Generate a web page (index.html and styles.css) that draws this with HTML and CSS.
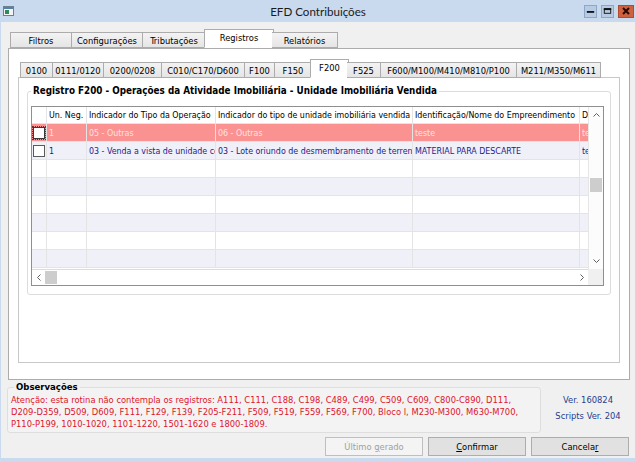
FILE: index.html
```html
<!DOCTYPE html>
<html lang="pt-BR">
<head>
<meta charset="utf-8">
<title>EFD Contribuições</title>
<link rel="stylesheet" href="styles.css">
</head>
<body>
<div class="window">
  <div class="titlebar">
    <div class="tb-left">
      <svg class="app-icon" width="11" height="10" viewBox="0 0 11 10"><rect x="0.5" y="0.5" width="10" height="9" fill="#f4f4f4" stroke="#6d7f92"/><rect x="1" y="1" width="9" height="2" fill="#5b7fa6"/><rect x="2" y="4" width="4" height="4" fill="#2f8a5a"/></svg>
    </div>
    <div class="title">EFD Contribuições</div>
    <div class="controls">
      <span class="ctl"><svg width="12" height="12" viewBox="0 0 12 12"><rect x="2" y="6" width="8" height="2" fill="#111"/></svg></span>
      <span class="ctl"><svg width="12" height="12" viewBox="0 0 12 12"><rect x="2.5" y="3.5" width="7" height="5" fill="none" stroke="#111"/><rect x="2" y="3" width="8" height="2" fill="#111"/></svg></span>
      <span class="ctl close"><svg width="14" height="12" viewBox="0 0 14 12"><path d="M4 3 L10 9 M10 3 L4 9" stroke="#2a0a00" stroke-width="2"/></svg></span>
    </div>
  </div>

  <div class="client">
    <div class="tabs main-tabs">
      <div class="tab t-filtros">Filtros</div>
      <div class="tab t-config">Configurações</div>
      <div class="tab t-trib">Tributações</div>
      <div class="tab active t-reg">Registros</div>
      <div class="tab t-rel">Relatórios</div>
    </div>
    <div class="main-panel">
      <div class="tabs sub-tabs">
        <div class="tab s1">0100</div>
        <div class="tab s2">0111/0120</div>
        <div class="tab s3">0200/0208</div>
        <div class="tab s4">C010/C170/D600</div>
        <div class="tab s5">F100</div>
        <div class="tab s6">F150</div>
        <div class="tab active s7">F200</div>
        <div class="tab s8">F525</div>
        <div class="tab s9">F600/M100/M410/M810/P100</div>
        <div class="tab s10">M211/M350/M611</div>
      </div>
      <div class="sub-panel">
        <fieldset class="group">
          <legend>Registro F200 - Operações da Atividade Imobiliária - Unidade Imobiliária Vendida</legend>
          <div class="grid">
            <div class="grid-body">
              <div class="row header">
                <div class="cell c0"></div>
                <div class="cell c1">Un. Neg.</div>
                <div class="cell c2">Indicador do Tipo da Operação</div>
                <div class="cell c3">Indicador do tipo de unidade imobiliária vendida</div>
                <div class="cell c4">Identificação/Nome do Empreendimento</div>
                <div class="cell c5">Descrição</div>
              </div>
              <div class="row selected">
                <div class="cell c0"><span class="check focus"></span></div>
                <div class="cell c1">1</div>
                <div class="cell c2">05 - Outras</div>
                <div class="cell c3">06 - Outras</div>
                <div class="cell c4">teste</div>
                <div class="cell c5">teste</div>
              </div>
              <div class="row data alt">
                <div class="cell c0"><span class="check"></span></div>
                <div class="cell c1">1</div>
                <div class="cell c2">03 - Venda a vista de unidade concluída</div>
                <div class="cell c3">03 - Lote oriundo de desmembramento de terreno</div>
                <div class="cell c4">MATERIAL PARA DESCARTE</div>
                <div class="cell c5">teste</div>
              </div>
              <div class="row"><div class="cell c0"></div><div class="cell c1"></div><div class="cell c2"></div><div class="cell c3"></div><div class="cell c4"></div><div class="cell c5"></div></div>
              <div class="row alt"><div class="cell c0"></div><div class="cell c1"></div><div class="cell c2"></div><div class="cell c3"></div><div class="cell c4"></div><div class="cell c5"></div></div>
              <div class="row"><div class="cell c0"></div><div class="cell c1"></div><div class="cell c2"></div><div class="cell c3"></div><div class="cell c4"></div><div class="cell c5"></div></div>
              <div class="row alt"><div class="cell c0"></div><div class="cell c1"></div><div class="cell c2"></div><div class="cell c3"></div><div class="cell c4"></div><div class="cell c5"></div></div>
              <div class="row"><div class="cell c0"></div><div class="cell c1"></div><div class="cell c2"></div><div class="cell c3"></div><div class="cell c4"></div><div class="cell c5"></div></div>
              <div class="row alt"><div class="cell c0"></div><div class="cell c1"></div><div class="cell c2"></div><div class="cell c3"></div><div class="cell c4"></div><div class="cell c5"></div></div>
            </div>
            <div class="vscroll">
              <span class="arrow"><svg width="7" height="4" viewBox="0 0 7 4"><path d="M0.5 3.5 L3.5 0.5 L6.5 3.5" fill="none" stroke="#606060"/></svg></span>
              <span class="vtrack"><span class="vthumb"></span></span>
              <span class="arrow"><svg width="7" height="4" viewBox="0 0 7 4"><path d="M0.5 0.5 L3.5 3.5 L6.5 0.5" fill="none" stroke="#606060"/></svg></span>
            </div>
            <div class="hscroll">
              <span class="arrow"><svg width="4" height="7" viewBox="0 0 4 7"><path d="M3.5 0.5 L0.5 3.5 L3.5 6.5" fill="none" stroke="#606060"/></svg></span>
              <span class="hthumb"></span>
              <span class="htrack"></span>
              <span class="arrow"><svg width="4" height="7" viewBox="0 0 4 7"><path d="M0.5 0.5 L3.5 3.5 L0.5 6.5" fill="none" stroke="#606060"/></svg></span>
            </div>
            <div class="corner"></div>
          </div>
        </fieldset>
      </div>
    </div>

    <div class="bottom">
      <fieldset class="obs">
        <legend>Observações</legend>
        <p class="obs-text">Atenção: esta rotina não contempla os registros: A111, C111, C188, C198, C489, C499, C509, C609, C800-C890, D111,<br>D209-D359, D509, D609, F111, F129, F139, F205-F211, F509, F519, F559, F569, F700, Bloco I, M230-M300, M630-M700,<br>P110-P199, 1010-1020, 1101-1220, 1501-1620 e 1800-1809.</p>
      </fieldset>
      <div class="version">
        <div>Ver. 160824</div>
        <div>Scripts Ver. 204</div>
      </div>
    </div>

    <div class="buttons">
      <button class="btn" disabled>Último <u>g</u>erado</button>
      <button class="btn"><u>C</u>onfirmar</button>
      <button class="btn">Cancela<u>r</u></button>
    </div>
  </div>
</div>
</body>
</html>
```

FILE: styles.css
```css
* { box-sizing: border-box; }
html, body { margin: 0; padding: 0; }
body {
  font-family: "DejaVu Sans Condensed", "DejaVu Sans", sans-serif;
  font-size: 9.3px;
  color: #000;
  background: #c9daef;
}
.window {
  width: 636px;
  height: 462px;
  background: #c9daef;
  display: flex;
  flex-direction: column;
  padding: 0 1px 4px 1px;
  overflow: hidden;
}
.titlebar {
  height: 22px;
  display: grid;
  grid-template-columns: 80px 1fr 80px;
  align-items: center;
}
.tb-left { padding-left: 2px; display: flex; align-items: center; }
.title {
  font-family: Lato, "Open Sans", sans-serif;
  font-size: 11.6px;
  color: #1b1b1b;
  text-align: center;
  padding-top: 1px;
}
.controls {
  display: flex;
  justify-content: flex-end;
  align-items: center;
  gap: 4px;
  padding-right: 1px;
}
.ctl {
  width: 13px;
  height: 13px;
  display: flex;
  align-items: center;
  justify-content: center;
  background: #b7cbe4;
  border: 1px solid #8fa7c6;
}
.ctl.close {
  width: 16px;
  background: #cf6140;
  border-color: #b44a2c;
}

.client {
  flex: 1;
  background: #f0f0f0;
  display: flex;
  flex-direction: column;
}

/* tabs */
.tabs {
  display: flex;
  align-items: flex-end;
  position: relative;
  z-index: 1;
  margin-bottom: -1px;
}
.tab {
  height: 16px;
  border: 1px solid #acacac;
  border-left: none;
  background: linear-gradient(#f3f3f3, #e5e5e5);
  display: flex;
  align-items: center;
  justify-content: center;
  white-space: nowrap;
}
.tab:first-child { border-left: 1px solid #acacac; }
.tab.active {
  height: 19px;
  background: #fff;
  border-bottom-color: #fff;
  border-left: 1px solid #acacac;
  margin-left: -2px;
  margin-right: -2px;
  padding-bottom: 2px;
}
.tab.active + .tab { border-left: none; }

.main-tabs { margin: 7px 0 0 9px; }
.t-filtros { width: 62px; }
.t-config { width: 71px; }
.t-trib { width: 63px; }
.t-reg { width: 70px; }
.t-rel { width: 66px; }

.main-panel {
  margin-left: 7px;
  width: 622px;
  height: 332px;
  border: 1px solid #acacac;
  background: #fff;
  padding: 10px 0 0 9px;
}
.sub-tabs { margin-left: 2px; }
.s1 { width: 33px; }
.s2 { width: 51px; }
.s3 { width: 58px; }
.s4 { width: 83px; }
.s5 { width: 30px; }
.s6 { width: 37px; }
.s7 { width: 39px; }
.s8 { width: 34px; }
.s9 { width: 136px; }
.s10 { width: 84px; }

.sub-panel {
  width: 602px;
  height: 286px;
  border: 1px solid #c8c8c8;
  background: #fff;
  padding: 7px 0 0 8px;
}

.group {
  margin: 0;
  width: 584px;
  border: 1px solid #dcdcdc;
  border-radius: 3px;
  padding: 9px 6px 8px 3px;
  min-width: 0;
}
.group legend {
  font-weight: bold;
  font-size: 9.8px;
  line-height: 12px;
  padding: 0 2px;
  color: #000;
}

/* grid */
.grid {
  width: 573px;
  height: 180px;
  border: 1px solid #8e8f8f;
  display: grid;
  grid-template-columns: 1fr 15px;
  grid-template-rows: 1fr 16px;
  background: #fff;
  overflow: hidden;
  font-size: 8.8px;
}
.grid-body { overflow: hidden; }
.row {
  display: flex;
  height: 18px;
  border-bottom: 1px solid #e4e4e4;
}
.row.header { height: 17px; }
.row.alt { background: #eff0f8; }
.row.selected { background: #f99290; color: #ffe2e2; }
.row.data { color: #1c1c8c; }
.cell {
  flex: none;
  border-right: 1px solid #e4e4e4;
  padding: 0 0 0 2px;
  display: flex;
  align-items: center;
  overflow: hidden;
  white-space: nowrap;
}
.c0 { width: 15px; padding: 0 0 0 1px; }
.c1 { width: 40px; }
.c2 { width: 129px; }
.c3 { width: 197px; }
.c4 { width: 167px; }
.c5 { width: 30px; border-right: none; }
.check {
  width: 12px;
  height: 12px;
  border: 1px solid #5a5a5a;
  background: #fff;
  display: block;
}
.check.focus { outline: 1px dotted #6b3030; outline-offset: 0; border-color: #3a3a3a; }

.vscroll {
  display: flex;
  flex-direction: column;
  background: #fcfcfc;
  border-left: 1px solid #e6e6e6;
}
.vscroll .arrow {
  height: 16px;
  display: flex;
  align-items: center;
  justify-content: center;
}
.vtrack { flex: 1; padding-top: 55px; }
.vthumb { display: block; height: 14px; background: #cdcdcd; margin: 0 1px; }
.hscroll {
  display: flex;
  align-items: stretch;
  background: #fff;
  border-top: 1px solid #dcdcdc;
}
.hscroll .arrow {
  width: 13px;
  display: flex;
  align-items: center;
  justify-content: center;
}
.hthumb { width: 12px; background: #cdcdcd; margin: 1px 0; }
.htrack { flex: 1; }
.corner { background: #f0f0f0; }

/* bottom */
.bottom {
  display: flex;
  margin-top: 1px;
  height: 52px;
}
.obs {
  margin: 0 0 0 6px;
  width: 534px;
  min-width: 0;
  border: 1px solid #dedede;
  border-radius: 3px;
  background: #f3f3f3;
  padding: 1px 0 0 3px;
}
.obs legend {
  font-weight: bold;
  font-size: 9.5px;
  line-height: 12px;
  padding: 0 2px;
  margin-left: 3px;
}
.obs-text {
  margin: 0;
  color: #e0142a;
  font-size: 9.3px;
  line-height: 12px;
  white-space: nowrap;
}
.version {
  flex: 1;
  display: flex;
  flex-direction: column;
  align-items: center;
  padding-top: 13px;
  gap: 4px;
  color: #24408e;
  font-size: 9.3px;
  line-height: 12px;
}

.buttons {
  display: flex;
  justify-content: flex-end;
  gap: 5px;
  margin-top: 4px;
  padding-right: 6px;
}
.btn {
  width: 98px;
  height: 19px;
  border: 1px solid #adadad;
  background: #e1e1e1;
  font-family: "DejaVu Sans Condensed", "DejaVu Sans", sans-serif;
  font-size: 9.3px;
  color: #000;
  padding: 0;
}
.btn:disabled {
  background: #f4f4f4;
  border-color: #bfbfbf;
  color: #a0a0a0;
}
```
